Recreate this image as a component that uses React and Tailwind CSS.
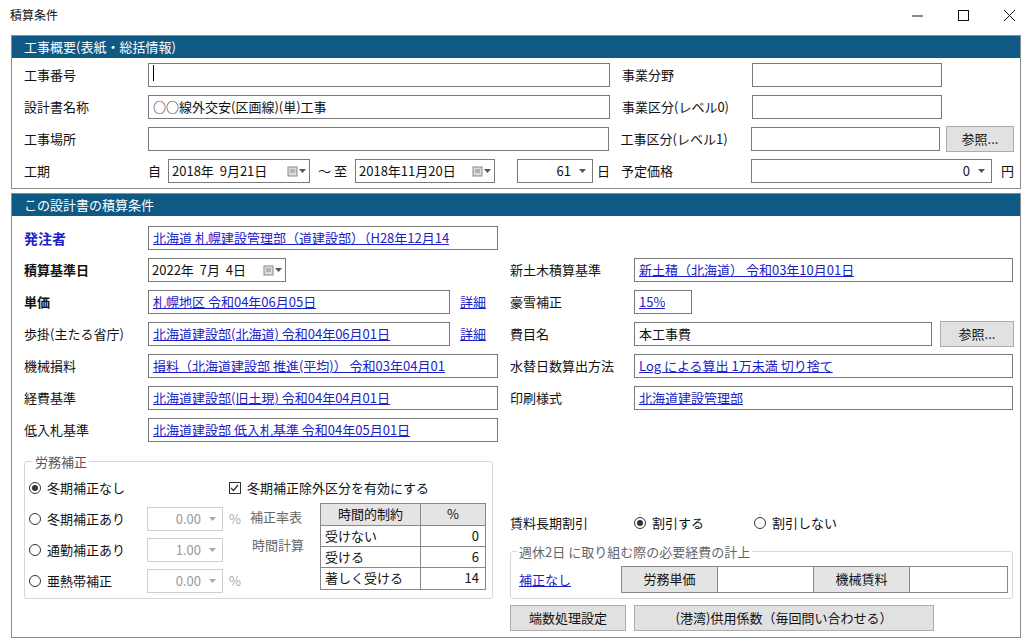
import React from 'react'

const F = { fontFamily: '"Noto Sans CJK JP", "Liberation Sans", sans-serif' }

function Box({ w, children, link, right, className = '' }) {
  return (
    <div className={`h-[24px] border border-[#7a7a7a] bg-white flex items-center px-[4px] text-[13px] ${right ? 'justify-end' : ''} ${className}`} style={{ width: w }}>
      {link ? <span className="text-[#1a22c8] underline whitespace-nowrap overflow-hidden">{children}</span> : <span className="whitespace-nowrap overflow-hidden">{children}</span>}
    </div>
  )
}

function Cal() {
  return (
    <span className="ml-auto flex items-center gap-[1px] text-[#666]">
      <svg width="11" height="11" viewBox="0 0 11 11"><rect x="1" y="1" width="9" height="9" fill="#ddd" stroke="#888" /><line x1="3" y1="4" x2="8" y2="4" stroke="#888" /><line x1="3" y1="6" x2="8" y2="6" stroke="#888" /></svg>
      <Caret />
    </span>
  )
}

function Caret({ c = '#555' }) {
  return <svg width="7" height="4" viewBox="0 0 7 4"><path d="M0 0h7L3.5 4z" fill={c} /></svg>
}

function DateBox({ w, text }) {
  return (
    <div className="h-[24px] border border-[#7a7a7a] bg-white flex items-center px-[3px] text-[13px]" style={{ width: w }}>
      <span className="whitespace-pre">{text}</span>
      <Cal />
    </div>
  )
}

function Combo({ w, text, disabled }) {
  return (
    <div className={`h-[24px] border ${disabled ? 'border-[#cfcfcf] text-[#999]' : 'border-[#7a7a7a]'} bg-white flex items-center justify-end gap-[8px] px-[6px] text-[13px]`} style={{ width: w }}>
      <span>{text}</span>
      <Caret c={disabled ? '#aaa' : '#555'} />
    </div>
  )
}

function Btn({ w, children, h = 'h-[26px]' }) {
  return (
    <div className={`${h} border border-[#adadad] bg-[#e1e1e1] flex items-center justify-center text-[13px]`} style={{ width: w }}>{children}</div>
  )
}

function Header({ children }) {
  return <div className="h-[22px] bg-[#0f5a84] text-white text-[13px] flex items-center px-[12px]">{children}</div>
}

function Radio({ on, children, className = '' }) {
  return (
    <div className={`flex items-center gap-[6px] text-[13px] ${className}`}>
      <span className="w-[12px] h-[12px] rounded-full border border-[#333] bg-white flex items-center justify-center">
        {on && <span className="w-[6px] h-[6px] rounded-full bg-[#333]" />}
      </span>
      {children}
    </div>
  )
}

function Row({ children, className = '' }) {
  return <div className={`h-[32px] flex items-center ${className}`}>{children}</div>
}

function Label({ w = 124, children, className = '' }) {
  return <div className={`shrink-0 text-[13px] ${className}`} style={{ width: w }}>{children}</div>
}

export default function App() {
  return (
    <div className="w-[1032px] h-[644px] bg-white text-[#111] overflow-hidden" style={F}>
      <div className="h-[30px] flex items-center pl-[10px] text-[12px]">
        <span>積算条件</span>
        <div className="ml-auto flex items-center">
          <span className="w-[46px] flex justify-center"><svg width="11" height="11"><line x1="0" y1="6" x2="11" y2="6" stroke="#111" /></svg></span>
          <span className="w-[46px] flex justify-center"><svg width="11" height="11"><rect x="0.5" y="0.5" width="10" height="10" fill="none" stroke="#111" /></svg></span>
          <span className="w-[46px] flex justify-center"><svg width="11" height="11"><path d="M0 0L11 11M11 0L0 11" stroke="#111" /></svg></span>
        </div>
      </div>

      <div className="mx-[11px] mt-[5px] border border-[#8c8c8c] h-[154px]">
        <Header>工事概要(表紙・総括情報)</Header>
        <div className="pl-[12px] pr-[6px] pt-[1px]">
          <Row>
            <Label>工事番号</Label>
            <Box w={462}><span className="border-l border-black h-[16px] inline-block" /></Box>
            <Label w={130} className="ml-[12px]">事業分野</Label>
            <Box w={190} />
          </Row>
          <Row>
            <Label>設計書名称</Label>
            <Box w={462}>○○線外交安(区画線)(単)工事</Box>
            <Label w={130} className="ml-[12px]">事業区分(レベル0)</Label>
            <Box w={190} />
          </Row>
          <Row>
            <Label>工事場所</Label>
            <Box w={462} />
            <Label w={130} className="ml-[12px]">工事区分(レベル1)</Label>
            <Box w={190} />
            <div className="ml-[6px]"><Btn w={68}>参照...</Btn></div>
          </Row>
          <Row>
            <Label>工期</Label>
            <span className="text-[13px] w-[20px]">自</span>
            <DateBox w={142} text="2018年  9月21日" />
            <span className="text-[13px] w-[45px] text-center">～ 至</span>
            <DateBox w={140} text="2018年11月20日" />
            <div className="ml-[22px]"><Combo w={76} text="61" /></div>
            <span className="text-[13px] ml-[4px] w-[24px]">日</span>
            <Label w={130}>予定価格</Label>
            <Combo w={241} text="0" />
            <span className="text-[13px] ml-[9px]">円</span>
          </Row>
        </div>
      </div>

      <div className="mx-[11px] mt-[4px] border border-[#8c8c8c] h-[445px]">
        <Header>この設計書の積算条件</Header>
        <div className="flex pl-[12px] pt-[6px]">
          <div className="w-[486px] flex flex-col">
            <Row><Label className="text-[#1a22c8] font-bold text-[14px]">発注者</Label><Box w={350} link>北海道 札幌建設管理部（道建設部）（H28年12月14</Box></Row>
            <Row><Label className="font-bold">積算基準日</Label><DateBox w={138} text="2022年  7月  4日" /></Row>
            <Row><Label className="font-bold">単価</Label><Box w={302} link>札幌地区 令和04年06月05日</Box><span className="ml-[10px] text-[13px] text-[#1a22c8] underline">詳細</span></Row>
            <Row><Label>歩掛(主たる省庁)</Label><Box w={302} link>北海道建設部(北海道) 令和04年06月01日</Box><span className="ml-[10px] text-[13px] text-[#1a22c8] underline">詳細</span></Row>
            <Row><Label>機械損料</Label><Box w={350} link>損料（北海道建設部  推進(平均)）  令和03年04月01</Box></Row>
            <Row><Label>経費基準</Label><Box w={350} link>北海道建設部(旧土現) 令和04年04月01日</Box></Row>
            <Row><Label>低入札基準</Label><Box w={350} link>北海道建設部    低入札基準 令和04年05月01日</Box></Row>
            <div className="relative mt-[15px] w-[469px] h-[138px] border border-[#d8d8d8] rounded-[3px] px-[4px] pt-[10px]">
              <span className="absolute -top-[10px] left-[8px] bg-white px-[2px] text-[13px] text-[#555]">労務補正</span>
              <div className="flex">
                <div className="flex flex-col">
                  <div className="h-[31px] flex items-center"><Radio on>冬期補正なし</Radio></div>
                  <div className="h-[31px] flex items-center"><Radio className="w-[118px]">冬期補正あり</Radio><Combo w={76} text="0.00" disabled /><span className="text-[13px] text-[#aaa] ml-[6px]">%</span></div>
                  <div className="h-[31px] flex items-center"><Radio className="w-[118px]">通勤補正あり</Radio><Combo w={76} text="1.00" disabled /></div>
                  <div className="h-[31px] flex items-center"><Radio className="w-[118px]">亜熱帯補正</Radio><Combo w={76} text="0.00" disabled /><span className="text-[13px] text-[#aaa] ml-[6px]">%</span></div>
                </div>
                <div className="flex flex-col ml-[9px]">
                  <div className="h-[31px] flex items-center gap-[6px] text-[13px] ml-[-21px]">
                    <span className="w-[12px] h-[12px] border border-[#333] flex items-center justify-center"><svg width="9" height="8" viewBox="0 0 9 8"><path d="M1 4l2.5 2.5L8 1" fill="none" stroke="#333" strokeWidth="1.3" /></svg></span>
                    冬期補正除外区分を有効にする
                  </div>
                  <div className="flex">
                    <div className="flex flex-col text-[13px] text-[#666] w-[70px]">
                      <div className="h-[28px] flex items-center">補正率表</div>
                      <div className="h-[28px] flex items-center pl-[2px]">時間計算</div>
                    </div>
                    <div className="border border-[#888] text-[13px] w-[166px]">
                      <div className="flex bg-[#e4e4e4] h-[22px] border-b border-[#888]"><div className="w-[100px] border-r border-[#888] text-center">時間的制約</div><div className="flex-1 text-center">%</div></div>
                      {[['受けない', '0'], ['受ける', '6'], ['著しく受ける', '14']].map(([a, b], i) => (
                        <div key={a} className={`flex h-[21px] ${i < 2 ? 'border-b border-[#888]' : ''}`}><div className="w-[100px] border-r border-[#888] pl-[4px]">{a}</div><div className="flex-1 text-right pr-[6px]">{b}</div></div>
                      ))}
                    </div>
                  </div>
                </div>
              </div>
            </div>
          </div>

          <div className="w-[506px] flex flex-col">
            <div className="h-[32px]" />
            <Row><Label>新土木積算基準</Label><Box w={379} link>新土積（北海道） 令和03年10月01日</Box></Row>
            <Row><Label>豪雪補正</Label><Box w={58} link>15%</Box></Row>
            <Row><Label>費目名</Label><Box w={298}>本工事費</Box><div className="ml-[8px]"><Btn w={74}>参照...</Btn></div></Row>
            <Row><Label>水替日数算出方法</Label><Box w={379} link>Log による算出 1万未満 切り捨て</Box></Row>
            <Row><Label>印刷様式</Label><Box w={379} link>北海道建設管理部</Box></Row>
            <div className="h-[93px]" />
            <Row className="h-[30px]">
              <Label>賃料長期割引</Label>
              <Radio on className="w-[120px]">割引する</Radio>
              <Radio>割引しない</Radio>
            </Row>
            <div className="relative mt-[12px] w-[503px] h-[48px] border border-[#d8d8d8] rounded-[3px] flex items-center pl-[8px]">
              <span className="absolute -top-[10px] left-[6px] bg-white px-[2px] text-[13px] text-[#666]">週休2日 に取り組む際の必要経費の計上</span>
              <span className="text-[13px] text-[#1a22c8] underline w-[102px] mt-[10px]">補正なし</span>
              <div className="flex border border-[#888] h-[27px] mt-[8px] text-[13px]">
                <div className="w-[96px] bg-[#e4e4e4] border-r border-[#888] flex items-center justify-center">労務単価</div>
                <div className="w-[96px] bg-white border-r border-[#888]" />
                <div className="w-[96px] bg-[#e4e4e4] border-r border-[#888] flex items-center justify-center">機械賃料</div>
                <div className="w-[97px] bg-white" />
              </div>
            </div>
            <div className="flex gap-[8px] mt-[6px]">
              <Btn w={116}>端数処理設定</Btn>
              <Btn w={300}>(港湾)供用係数（毎回問い合わせる）</Btn>
            </div>
          </div>
        </div>
      </div>
    </div>
  )
}
